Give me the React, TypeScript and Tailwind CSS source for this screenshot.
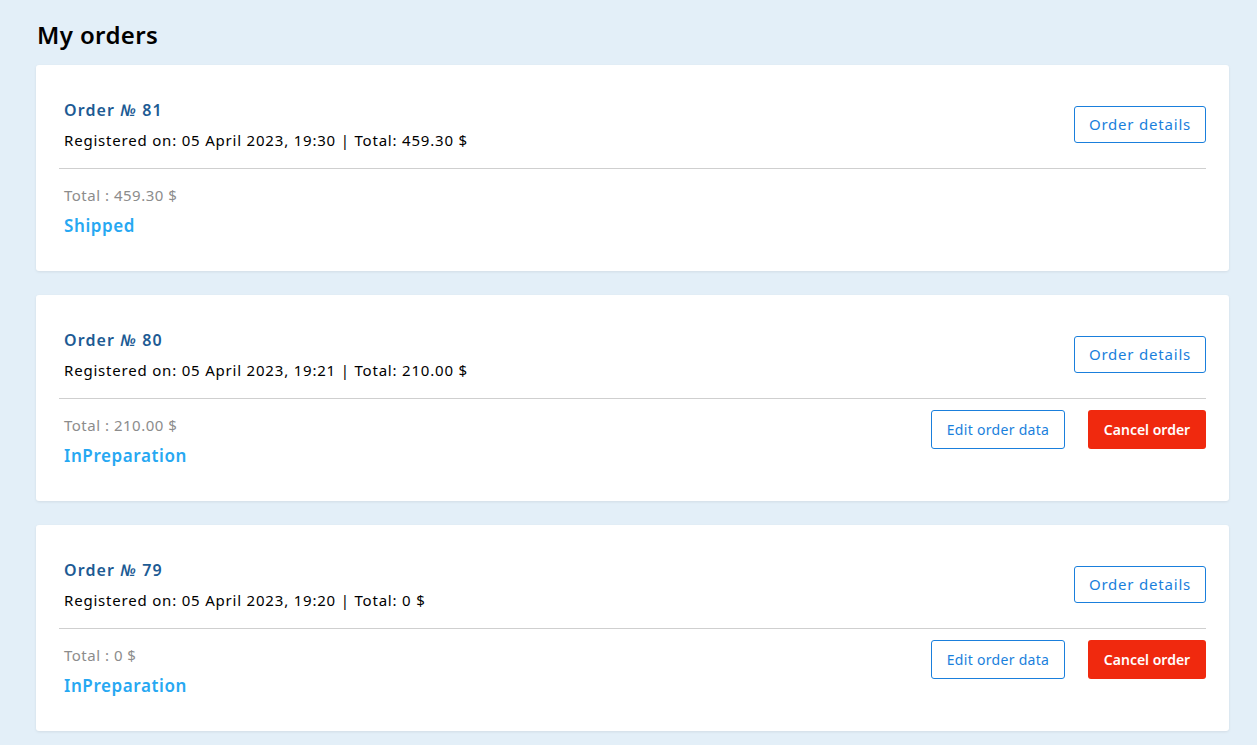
import React from 'react';

type Order = {
  id: number;
  date: string;
  total: string;
  status: string;
  editable: boolean;
};

const orders: Order[] = [
  { id: 81, date: '05 April 2023, 19:30', total: '459.30 $', status: 'Shipped', editable: false },
  { id: 80, date: '05 April 2023, 19:21', total: '210.00 $', status: 'InPreparation', editable: true },
  { id: 79, date: '05 April 2023, 19:20', total: '0 $', status: 'InPreparation', editable: true },
];

function OrderCard({ order }: { order: Order }) {
  return (
    <div className="bg-white rounded-[3px] shadow-[0_1px_3px_rgba(0,0,0,0.08)] px-[23px] pt-[33px] pb-[32px]">
      <div className="flex items-center justify-between pl-[5px] pb-[16px] border-b border-[#cfcfcf]">
        <div className="flex flex-col gap-[6px]">
          <div className="text-[16px] leading-[24px] font-semibold text-[#1d5b94] tracking-[1.1px]">
            Order <span className="italic">№</span> {order.id}
          </div>
          <div className="text-[15px] leading-[24px] text-black tracking-[0.8px]">
            Registered on: {order.date} | Total: {order.total}
          </div>
        </div>
        <button className="h-[37px] w-[132px] mb-[2px] border border-[#1a7fdc] rounded-[3px] text-[#1a7fdc] text-[15px] tracking-[0.8px]">
          Order details
        </button>
      </div>
      <div className="flex items-start justify-between">
        <div className="flex flex-col gap-[7px] pl-[5px] pt-[16px]">
          <div className="text-[15px] leading-[21px] text-[#8c8c8c] tracking-[0.5px]">Total : {order.total}</div>
          <div className="text-[17px] leading-[26px] font-semibold text-[#27a8f2] tracking-[0.6px]">{order.status}</div>
        </div>
        {order.editable && (
          <div className="flex gap-[23px] pt-[11px]">
            <button className="h-[39px] w-[134px] border border-[#1a7fdc] rounded-[3px] text-[#1a7fdc] text-[14px] tracking-[0.3px]">
              Edit order data
            </button>
            <button className="h-[39px] w-[118px] bg-[#f0290e] rounded-[3px] text-white text-[14px] font-semibold">
              Cancel order
            </button>
          </div>
        )}
      </div>
    </div>
  );
}

export default function App() {
  return (
    <div className="min-h-screen bg-[#e3eff8] px-[36px] pt-[19px] pb-[14px] font-['Noto_Sans',sans-serif]">
      <h1 className="text-[24px] leading-[32px] font-semibold text-black pl-[1px] mb-[14px] tracking-[0.4px]">My orders</h1>
      <div className="w-[1193px] flex flex-col gap-[24px]">
        {orders.map((o) => (
          <OrderCard key={o.id} order={o} />
        ))}
      </div>
    </div>
  );
}
